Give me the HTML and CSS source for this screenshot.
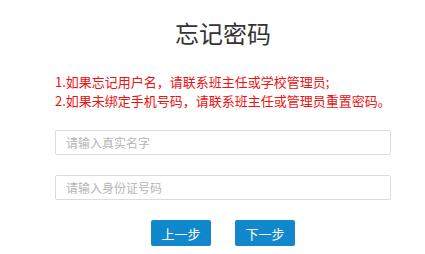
FILE: index.html
```html
<!DOCTYPE html>
<html lang="zh-CN">
<head>
<meta charset="utf-8">
<title>忘记密码</title>
<link rel="stylesheet" href="styles.css">
</head>
<body>
<div class="page">
  <h1 class="title">忘记密码</h1>
  <div class="notice">
    <p>1.如果忘记用户名，请联系班主任或学校管理员;</p>
    <p>2.如果未绑定手机号码，请联系班主任或管理员重置密码。</p>
  </div>
  <form class="form">
    <input class="field" type="text" placeholder="请输入真实名字">
    <input class="field" type="text" placeholder="请输入身份证号码">
    <div class="actions">
      <button type="button" class="btn">上一步</button>
      <button type="button" class="btn">下一步</button>
    </div>
  </form>
</div>
</body>
</html>
```

FILE: styles.css
```css
html, body {
  margin: 0;
  padding: 0;
  background: #fff;
}
body {
  font-family: "Noto Sans CJK SC", "Noto Sans", sans-serif;
}
.page {
  width: 336px;
  margin-left: 55px;
  padding-top: 16px;
}
.title {
  margin: 0;
  font-size: 24px;
  line-height: 34px;
  font-weight: normal;
  color: #333;
  text-align: center;
}
.notice {
  margin-top: 22px;
  color: #ee1111;
  font-size: 13px;
  line-height: 19px;
}
.notice p {
  margin: 0;
  white-space: nowrap;
}
.form {
  margin-top: 20px;
  display: flex;
  flex-direction: column;
  gap: 20px;
}
.field {
  box-sizing: border-box;
  width: 336px;
  height: 25px;
  margin: 0;
  padding: 0 10px;
  border: 1px solid #dcdcdc;
  border-radius: 2px;
  font-family: inherit;
  font-size: 12px;
  color: #333;
  outline: none;
}
.field::placeholder {
  color: #b5b5b5;
}
.actions {
  display: flex;
  justify-content: center;
  gap: 24px;
}
.btn {
  width: 60px;
  height: 26px;
  padding: 0;
  border: none;
  border-radius: 2px;
  background: #1188cc;
  color: #fff;
  font-family: inherit;
  font-size: 13px;
  cursor: pointer;
}
```
